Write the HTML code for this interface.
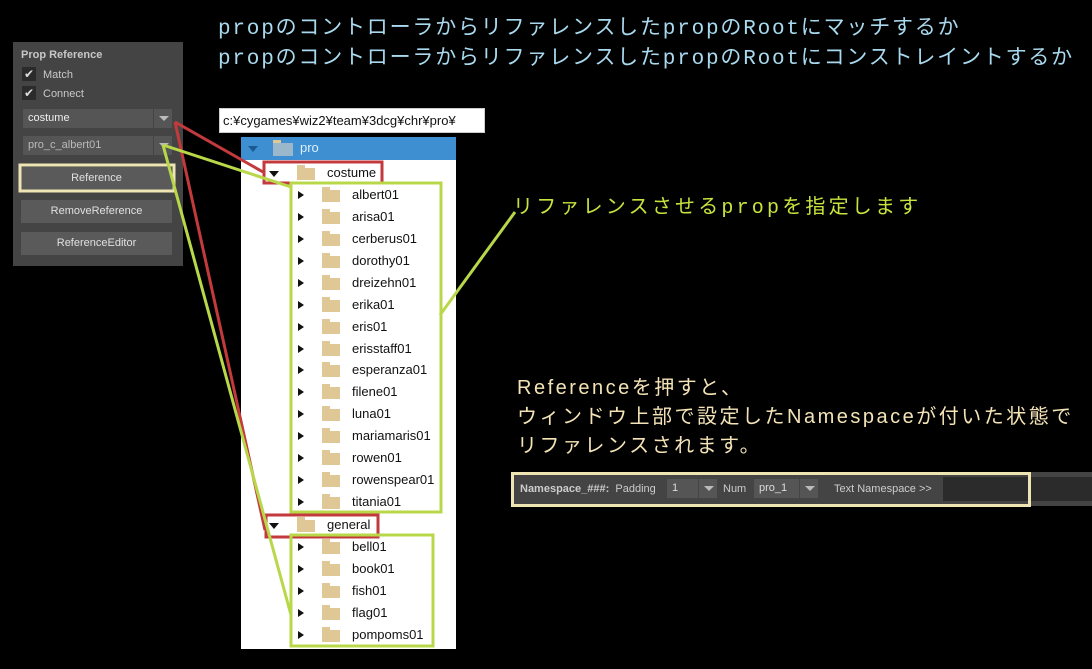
<!DOCTYPE html>
<html><head><meta charset="utf-8"><style>
*{margin:0;padding:0;box-sizing:border-box}
body{width:1092px;height:669px;background:#000;position:relative;overflow:hidden;font-family:"Liberation Sans","Noto Sans CJK JP",sans-serif}
.a{position:absolute}
.t1{color:#a9d9ee;font-size:21px;letter-spacing:1.8px;font-family:"Liberation Mono","Noto Sans CJK JP",monospace;white-space:nowrap;line-height:24px}
.panel{left:13px;top:42px;width:170px;height:224px;background:#444}
.lbl{color:#c8c8c8;font-size:11px}
.cb{width:14px;height:14px;background:#2b2b2b;color:#ddd;font-size:12px;line-height:14px;text-align:center}
.dd{background:#555;height:19px;color:#ddd;font-size:11px;line-height:19px;padding-left:5px}
.ddb{position:absolute;right:0;top:0;width:19px;height:19px;border-left:1px solid #444}
.ddb:after{content:"";position:absolute;left:5px;top:7px;border-left:5px solid transparent;border-right:5px solid transparent;border-top:5px solid #bbb}
.btn{left:21px;width:151px;height:23px;background:#5a5a5a;color:#e0e0e0;font-size:11px;text-align:center;line-height:23px}
.tree{left:241px;top:137px;width:215px;height:512px;background:#fff}
.row{position:absolute;height:22px;font-size:13px;color:#111;line-height:22px;font-family:"Liberation Sans",sans-serif}
.fold{position:absolute;width:18px;height:12px;background:#e0c896;top:6px}
.fold:before{content:"";position:absolute;left:0;top:-3px;width:8px;height:3px;background:#e0c896}
.ar{position:absolute;top:7px;border-top:4px solid transparent;border-bottom:4px solid transparent;border-left:6px solid #111}
.ad{position:absolute;top:9px;border-left:5px solid transparent;border-right:5px solid transparent;border-top:6px solid #111}
</style></head><body>
<div class="a t1" style="left:218px;top:18px">propのコントローラからリファレンスしたpropのRootにマッチするか</div>
<div class="a t1" style="left:218px;top:48px">propのコントローラからリファレンスしたpropのRootにコンストレイントするか</div>

<div class="a panel"></div>
<div class="a" style="left:21px;top:49px;color:#c8c8c8;font-size:11px;font-weight:bold">Prop Reference</div>
<div class="a cb" style="left:22px;top:67px">✔</div><div class="a lbl" style="left:43px;top:69px">Match</div>
<div class="a cb" style="left:22px;top:86px">✔</div><div class="a lbl" style="left:43px;top:88px">Connect</div>
<div class="a dd" style="left:23px;top:109px;width:149px;color:#eee">costume<div class="ddb"></div></div>
<div class="a dd" style="left:23px;top:136px;width:149px;color:#bbb">pro_c_albert01<div class="ddb"></div></div>
<div class="a btn" style="top:167px">Reference</div>
<div class="a btn" style="top:200px">RemoveReference</div>
<div class="a btn" style="top:232px">ReferenceEditor</div>

<div class="a" style="left:219px;top:108px;width:266px;height:25px;background:#fff;border:1px solid #ccc;font-size:13px;line-height:23px;padding-left:3px;color:#111">c:¥cygames¥wiz2¥team¥3dcg¥chr¥pro¥</div>
<div class="a tree">
 <div class="row" style="left:0;top:0;width:215px;height:23px;background:#3d8fd1;color:#dfeffa">
  <span class="ad" style="left:7px;border-top-color:#1a5a90"></span><span class="fold" style="left:32px;background:#9ab7cc;width:20px;height:13px"></span><span style="position:absolute;left:59px">pro</span></div>
 <div class="row" style="left:0;top:25px"><span class="ad" style="left:28px"></span><span class="fold" style="left:56px"></span><span style="position:absolute;left:86px">costume</span></div>
 <div style="position:absolute;left:0;top:47px">
  <div class="row" style="top:0px"><span class="ar" style="left:57px"></span><span class="fold" style="left:81px"></span><span style="position:absolute;left:111px">albert01</span></div>
  <div class="row" style="top:21.93px"><span class="ar" style="left:57px"></span><span class="fold" style="left:81px"></span><span style="position:absolute;left:111px">arisa01</span></div>
  <div class="row" style="top:43.86px"><span class="ar" style="left:57px"></span><span class="fold" style="left:81px"></span><span style="position:absolute;left:111px">cerberus01</span></div>
  <div class="row" style="top:65.79px"><span class="ar" style="left:57px"></span><span class="fold" style="left:81px"></span><span style="position:absolute;left:111px">dorothy01</span></div>
  <div class="row" style="top:87.72px"><span class="ar" style="left:57px"></span><span class="fold" style="left:81px"></span><span style="position:absolute;left:111px">dreizehn01</span></div>
  <div class="row" style="top:109.65px"><span class="ar" style="left:57px"></span><span class="fold" style="left:81px"></span><span style="position:absolute;left:111px">erika01</span></div>
  <div class="row" style="top:131.58px"><span class="ar" style="left:57px"></span><span class="fold" style="left:81px"></span><span style="position:absolute;left:111px">eris01</span></div>
  <div class="row" style="top:153.51px"><span class="ar" style="left:57px"></span><span class="fold" style="left:81px"></span><span style="position:absolute;left:111px">erisstaff01</span></div>
  <div class="row" style="top:175.44px"><span class="ar" style="left:57px"></span><span class="fold" style="left:81px"></span><span style="position:absolute;left:111px">esperanza01</span></div>
  <div class="row" style="top:197.37px"><span class="ar" style="left:57px"></span><span class="fold" style="left:81px"></span><span style="position:absolute;left:111px">filene01</span></div>
  <div class="row" style="top:219.3px"><span class="ar" style="left:57px"></span><span class="fold" style="left:81px"></span><span style="position:absolute;left:111px">luna01</span></div>
  <div class="row" style="top:241.23px"><span class="ar" style="left:57px"></span><span class="fold" style="left:81px"></span><span style="position:absolute;left:111px">mariamaris01</span></div>
  <div class="row" style="top:263.16px"><span class="ar" style="left:57px"></span><span class="fold" style="left:81px"></span><span style="position:absolute;left:111px">rowen01</span></div>
  <div class="row" style="top:285.09px"><span class="ar" style="left:57px"></span><span class="fold" style="left:81px"></span><span style="position:absolute;left:111px">rowenspear01</span></div>
  <div class="row" style="top:307.02px"><span class="ar" style="left:57px"></span><span class="fold" style="left:81px"></span><span style="position:absolute;left:111px">titania01</span></div>
 </div>
 <div class="row" style="left:0;top:377px"><span class="ad" style="left:28px"></span><span class="fold" style="left:56px"></span><span style="position:absolute;left:86px">general</span></div>
 <div style="position:absolute;left:0;top:399px">
  <div class="row" style="top:0px"><span class="ar" style="left:57px"></span><span class="fold" style="left:81px"></span><span style="position:absolute;left:111px">bell01</span></div>
  <div class="row" style="top:22px"><span class="ar" style="left:57px"></span><span class="fold" style="left:81px"></span><span style="position:absolute;left:111px">book01</span></div>
  <div class="row" style="top:44px"><span class="ar" style="left:57px"></span><span class="fold" style="left:81px"></span><span style="position:absolute;left:111px">fish01</span></div>
  <div class="row" style="top:66px"><span class="ar" style="left:57px"></span><span class="fold" style="left:81px"></span><span style="position:absolute;left:111px">flag01</span></div>
  <div class="row" style="top:88px"><span class="ar" style="left:57px"></span><span class="fold" style="left:81px"></span><span style="position:absolute;left:111px">pompoms01</span></div>
 </div>
</div>

<div class="a" style="left:513px;top:190px;color:#c9e33e;font-size:20px;letter-spacing:3.2px;white-space:nowrap;font-family:'Liberation Mono','Noto Sans CJK JP',monospace">リファレンスさせるpropを指定します</div>
<div class="a" style="left:517px;top:374px;color:#f3e3b6;font-size:20px;letter-spacing:2.5px;line-height:29px;white-space:nowrap;font-family:'Liberation Sans Narrow','Liberation Sans','Noto Sans CJK JP',sans-serif">Referenceを押すと、<br>ウィンドウ上部で設定したNamespaceが付いた状態で<br>リファレンスされます。</div>

<div class="a" style="left:511px;top:472px;width:581px;height:34px;background:#444"></div>
<div class="a" style="left:520px;top:483px;color:#ccc;font-size:11px;white-space:nowrap"><b>Namespace_###:</b>&nbsp; Padding</div>
<div class="a dd" style="left:667px;top:479px;width:50px;height:19px;font-size:11px">1<div class="ddb" style="border-left-color:#444"></div></div>
<div class="a" style="left:723px;top:483px;color:#ccc;font-size:11px">Num</div>
<div class="a dd" style="left:754px;top:479px;width:64px;font-size:11px">pro_1<div class="ddb" style="border-left-color:#444"></div></div>
<div class="a" style="left:834px;top:483px;color:#ccc;font-size:11px">Text Namespace &gt;&gt;</div>
<div class="a" style="left:943px;top:477px;width:149px;height:24px;background:#2b2b2b"></div>

<svg class="a" style="left:0;top:0" width="1092" height="669">
 <g fill="none" stroke-width="3">
  <rect x="20" y="165" width="154" height="26" stroke="#eee4b4"/>
  <rect x="512.5" y="473.5" width="517" height="32" stroke="#eee4b4"/>
  <polyline points="175,122 263,172" stroke="#c23a3c"/>
  <polyline points="175,122 265,530" stroke="#c23a3c"/>
  <rect x="264" y="162" width="118" height="21" stroke="#c23a3c"/>
  <rect x="266" y="515" width="112" height="22" stroke="#c23a3c"/>
  <g stroke="#b8d84a">
   <polyline points="163,145 291,187"/>
   <polyline points="163,145 291,615"/>
   <polyline points="440,315 515,212"/>
   <rect x="291" y="183" width="150" height="329"/>
   <rect x="291" y="535" width="142" height="111"/>
  </g>
 </g>
</svg>
</body></html>
